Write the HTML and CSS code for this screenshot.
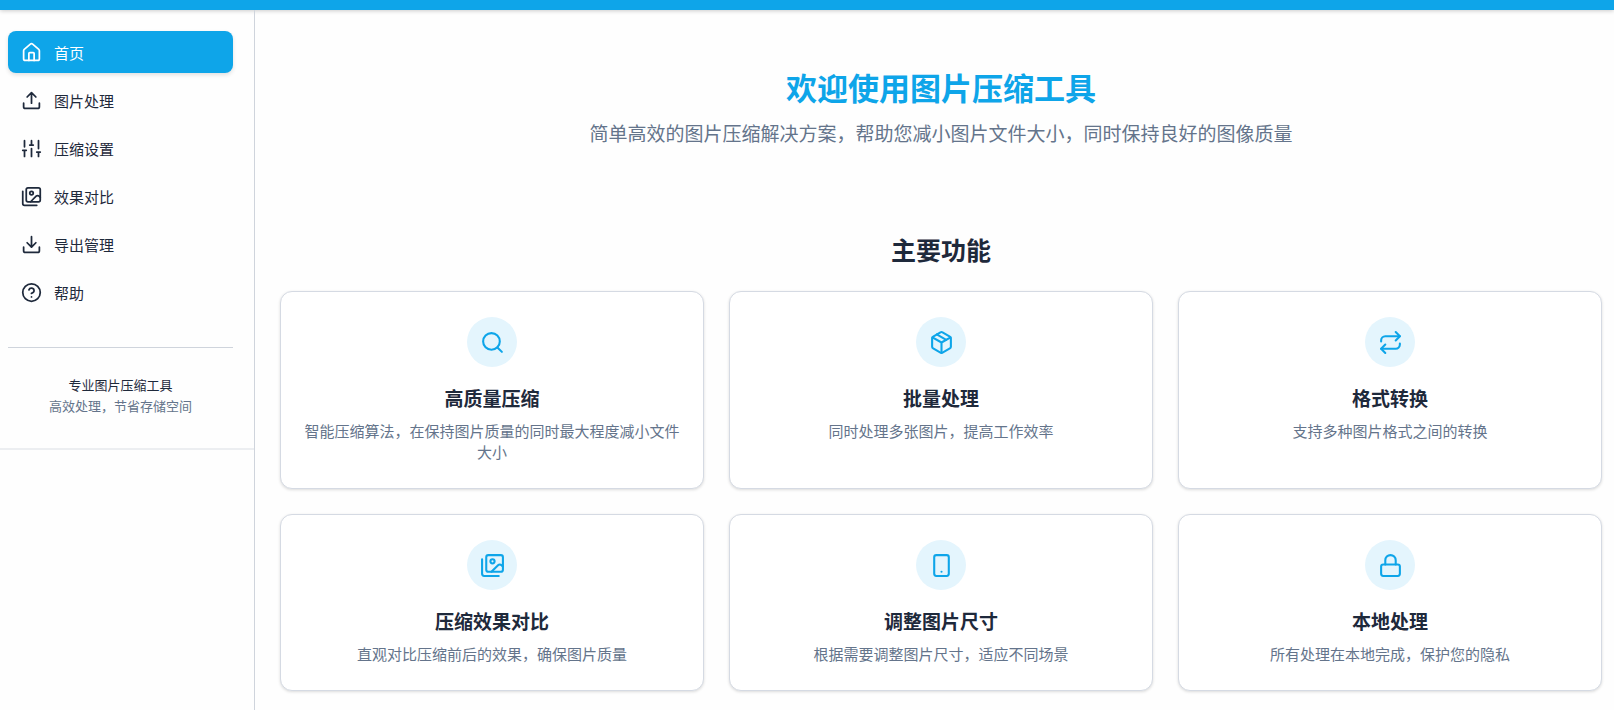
FILE: index.html
```html
<!DOCTYPE html>
<html lang="zh-CN">
<head>
<meta charset="utf-8">
<title>图片压缩工具</title>
<link rel="stylesheet" href="styles.css">
</head>
<body>
<svg class="sprite" aria-hidden="true">
  <symbol id="i-home" viewBox="0 0 24 24"><path d="M15 21v-8a1 1 0 0 0-1-1h-4a1 1 0 0 0-1 1v8"/><path d="M3 10a2 2 0 0 1 .7-1.5l7-6a2 2 0 0 1 2.600 0l7 6A2 2 0 0 1 21 10v9a2 2 0 0 1-2 2H5a2 2 0 0 1-2-2z"/></symbol>
  <symbol id="i-upload" viewBox="0 0 24 24"><path d="M21 15v4a2 2 0 0 1-2 2H5a2 2 0 0 1-2-2v-4"/><path d="m17 8-5-5-5 5M12 3v12"/></symbol>
  <symbol id="i-sliders" viewBox="0 0 24 24"><path d="M4 21v-7M4 10V3M12 21v-9M12 8V3M20 21v-5M20 12V3M2 14h4M10 8h4M18 16h4"/></symbol>
  <symbol id="i-images" viewBox="0 0 24 24"><path d="M18 22H4a2 2 0 0 1-2-2V6"/><path d="m22 13-1.300-1.300a2.400 2.400 0 0 0-3.400 0L11 18"/><circle cx="12" cy="8" r="2"/><rect width="16" height="16" x="6" y="2" rx="2"/></symbol>
  <symbol id="i-download" viewBox="0 0 24 24"><path d="M21 15v4a2 2 0 0 1-2 2H5a2 2 0 0 1-2-2v-4"/><path d="m7 10 5 5 5-5M12 15V3"/></symbol>
  <symbol id="i-help" viewBox="0 0 24 24"><circle cx="12" cy="12" r="10"/><path d="M9.090 9a3 3 0 0 1 5.830 1c0 2-3 3-3 3M12 17h.01"/></symbol>
  <symbol id="i-search" viewBox="0 0 24 24"><circle cx="11" cy="11" r="8"/><path d="m21 21-4.300-4.300"/></symbol>
  <symbol id="i-package" viewBox="0 0 24 24"><path d="m7.500 4.270 9 5.150"/><path d="M21 8a2 2 0 0 0-1-1.730l-7-4a2 2 0 0 0-2 0l-7 4A2 2 0 0 0 3 8v8a2 2 0 0 0 1 1.730l7 4a2 2 0 0 0 2 0l7-4A2 2 0 0 0 21 16Z"/><path d="m3.300 7 8.700 5 8.700-5M12 22V12"/></symbol>
  <symbol id="i-repeat" viewBox="0 0 24 24"><path d="m17 2 4 4-4 4"/><path d="M3 11v-1a4 4 0 0 1 4-4h14"/><path d="m7 22-4-4 4-4"/><path d="M21 13v1a4 4 0 0 1-4 4H3"/></symbol>
  <symbol id="i-tablet" viewBox="0 0 24 24"><rect width="14" height="20" x="5" y="2" rx="2"/><path d="M12 18h.01"/></symbol>
  <symbol id="i-lock" viewBox="0 0 24 24"><rect width="18" height="11" x="3" y="11" rx="2"/><path d="M7 11V7a5 5 0 0 1 10 0v4"/></symbol>
</svg>
<header class="topbar"></header>
<div class="layout">
  <aside class="sidebar">
    <div class="panel">
      <nav class="nav">
        <a class="nav-link active" href="#home"><svg class="icon"><use href="#i-home"/></svg>首页</a>
        <a class="nav-link" href="#process"><svg class="icon"><use href="#i-upload"/></svg>图片处理</a>
        <a class="nav-link" href="#settings"><svg class="icon"><use href="#i-sliders"/></svg>压缩设置</a>
        <a class="nav-link" href="#compare"><svg class="icon"><use href="#i-images"/></svg>效果对比</a>
        <a class="nav-link" href="#export"><svg class="icon"><use href="#i-download"/></svg>导出管理</a>
        <a class="nav-link" href="#help"><svg class="icon"><use href="#i-help"/></svg>帮助</a>
      </nav>
      <div class="about">
        <p class="about-name">专业图片压缩工具</p>
        <p>高效处理，节省存储空间</p>
      </div>
    </div>
  </aside>
  <main class="main">
    <section class="hero">
      <h1>欢迎使用图片压缩工具</h1>
      <p>简单高效的图片压缩解决方案，帮助您减小图片文件大小，同时保持良好的图像质量</p>
    </section>
    <section>
      <h2>主要功能</h2>
      <div class="cards">
        <article class="card"><span class="badge"><svg class="icon"><use href="#i-search"/></svg></span><h3>高质量压缩</h3><p>智能压缩算法，在保持图片质量的同时最大程度减小文件大小</p></article>
        <article class="card"><span class="badge"><svg class="icon"><use href="#i-package"/></svg></span><h3>批量处理</h3><p>同时处理多张图片，提高工作效率</p></article>
        <article class="card"><span class="badge"><svg class="icon"><use href="#i-repeat"/></svg></span><h3>格式转换</h3><p>支持多种图片格式之间的转换</p></article>
        <article class="card"><span class="badge"><svg class="icon"><use href="#i-images"/></svg></span><h3>压缩效果对比</h3><p>直观对比压缩前后的效果，确保图片质量</p></article>
        <article class="card"><span class="badge"><svg class="icon"><use href="#i-tablet"/></svg></span><h3>调整图片尺寸</h3><p>根据需要调整图片尺寸，适应不同场景</p></article>
        <article class="card"><span class="badge"><svg class="icon"><use href="#i-lock"/></svg></span><h3>本地处理</h3><p>所有处理在本地完成，保护您的隐私</p></article>
      </div>
    </section>
  </main>
</div>
</body>
</html>
```
FILE: styles.css
```css
* { box-sizing: border-box; }
h1, h2, h3, p { margin: 0; }
body {
  margin: 0;
  min-height: 100vh;
  display: flex;
  flex-direction: column;
  background: #fefefe;
  color: #1e293b;
  font-family: "Noto Sans CJK SC", sans-serif;
  font-size: 15px;
  line-height: 21px;
}
.sprite { display: none; }
.icon {
  width: 21px;
  height: 21px;
  flex: none;
  fill: none;
  stroke: currentColor;
  stroke-width: 2;
  stroke-linecap: round;
  stroke-linejoin: round;
}
.topbar {
  height: 10px;
  background: #0ea5e9;
  box-shadow: 0 1px 4px rgba(0, 0, 0, 0.2);
}
.layout { flex: 1; display: flex; }
.sidebar {
  width: 255px;
  flex: none;
  border-right: 1px solid #cfd4dc;
}
.panel {
  padding: 21px 21px 32px 8px;
  border-bottom: 2px solid #eceef1;
}
.nav { display: flex; flex-direction: column; gap: 6px; }
.nav-link {
  display: flex;
  align-items: center;
  gap: 12px;
  height: 42px;
  padding: 0 13px;
  border-radius: 8px;
  color: #1e293b;
  text-decoration: none;
}
.nav-link.active {
  background: #0ea5e9;
  color: #fff;
  box-shadow: 0 2px 4px rgba(0, 0, 0, 0.12);
}
.about {
  margin-top: 34px;
  padding-top: 26px;
  border-top: 1px solid #cfd4dc;
  text-align: center;
  font-size: 13px;
  color: #64748b;
}
.about-name { color: #1e293b; }
.main { flex: 1; min-width: 0; padding: 55px 12px 18px 25px; text-align: center; }
.hero { margin-bottom: 85px; }
h1 { font-size: 31px; line-height: 44px; color: #0ea5e9; }
.hero p { margin-top: 10px; font-size: 19px; line-height: 28px; color: #64748b; }
h2 { font-size: 25px; line-height: 34px; margin-bottom: 25px; }
.cards {
  display: grid;
  grid-template-columns: repeat(3, minmax(0, 1fr));
  gap: 25px;
}
.card {
  padding: 25px 23px;
  display: flex;
  flex-direction: column;
  align-items: center;
  background: #fff;
  border: 1px solid #d5dae3;
  border-radius: 12px;
  box-shadow: 0 1px 3px rgba(0, 0, 0, 0.14);
}
.badge {
  width: 50px;
  height: 50px;
  display: flex;
  align-items: center;
  justify-content: center;
  border-radius: 50%;
  background: #e4f5fd;
  color: #0ea5e9;
}
.badge .icon { width: 25px; height: 25px; }
h3 { margin: 17px 0 8px; font-size: 19px; line-height: 28px; }
.card p { padding-bottom: 1px; color: #64748b; }
```
